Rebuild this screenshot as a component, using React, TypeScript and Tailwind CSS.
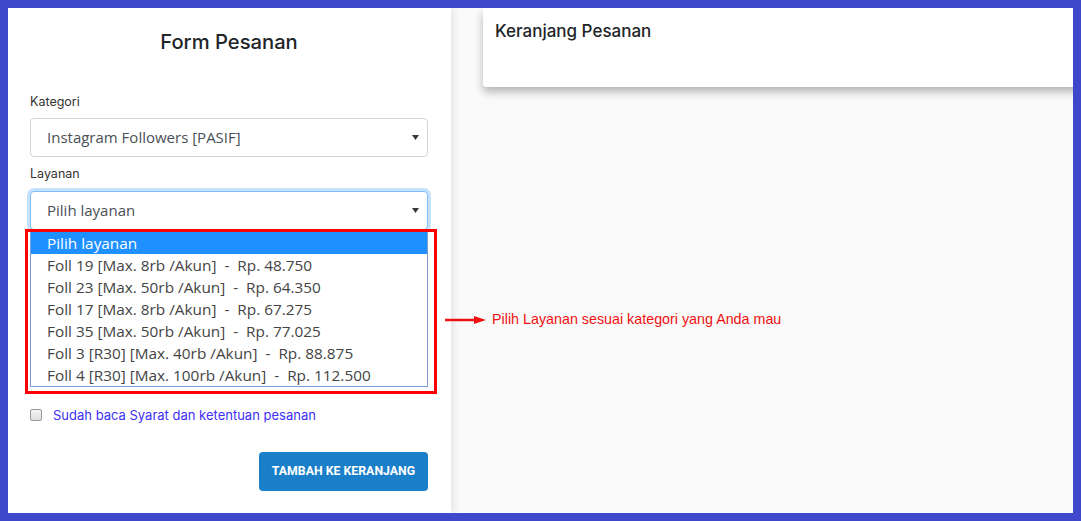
import React from "react";

const poppins = "font-['Inter','Noto_Sans',sans-serif]";
const segoe = "font-['Open_Sans','Noto_Sans',sans-serif]";

const options = [
  "Foll 19 [Max. 8rb /Akun]  -  Rp. 48.750",
  "Foll 23 [Max. 50rb /Akun]  -  Rp. 64.350",
  "Foll 17 [Max. 8rb /Akun]  -  Rp. 67.275",
  "Foll 35 [Max. 50rb /Akun]  -  Rp. 77.025",
  "Foll 3 [R30] [Max. 40rb /Akun]  -  Rp. 88.875",
  "Foll 4 [R30] [Max. 100rb /Akun]  -  Rp. 112.500",
];

function Caret() {
  return (
    <svg width="7" height="5" viewBox="0 0 7 5" className="shrink-0">
      <path d="M0 0 L7 0 L3.5 5 Z" fill="#343a40" />
    </svg>
  );
}

function FakeSelect({ value, focused }: { value: string; focused?: boolean }) {
  return (
    <div
      className={
        "flex h-[39px] items-center justify-between rounded-[4px] border bg-white pl-[16px] pr-[8px] " +
        (focused
          ? "border-[#80bdff] shadow-[0_0_0_3px_rgba(0,123,255,0.22)]"
          : "border-[#ced4da]")
      }
    >
      <span className={`${segoe} text-[15px] text-[#495057]`}>{value}</span>
      <Caret />
    </div>
  );
}

export default function App() {
  return (
    <div className="relative h-[521px] w-[1081px] overflow-hidden bg-[#3f48cb] p-[8px]">
      <div className="flex h-full w-full overflow-hidden bg-[#fafafa]">
        {/* form panel */}
        <div className="relative z-10 w-[443px] shrink-0 bg-white pl-[22px] pr-[23px] pt-[22px] shadow-[3px_0_8px_rgba(0,0,0,0.09)]">
          <h2 className={`${poppins} text-center text-[20.2px] font-medium leading-[24px] text-[#212529]`}>
            Form Pesanan
          </h2>

          <label className={`${poppins} mt-[38px] block text-[12.5px] leading-[20px] text-[#333]`}>
            Kategori
          </label>
          <div className="mt-[6px]">
            <FakeSelect value="Instagram Followers [PASIF]" />
          </div>

          <label className={`${poppins} mt-[7px] block text-[12.5px] leading-[20px] text-[#333]`}>
            Layanan
          </label>
          <div className="relative mt-[7px]">
            <FakeSelect value="Pilih layanan" focused />
            <ul
              className={`${segoe} absolute left-0 right-0 top-[40px] z-20 border border-[#7f9ccf] bg-white text-[15.35px] leading-[22px] text-[#444]`}
            >
              <li className="whitespace-pre bg-[#1e90ff] pl-[16px] text-white">Pilih layanan</li>
              {options.map((o) => (
                <li key={o} className="whitespace-pre pl-[16px]">
                  {o}
                </li>
              ))}
            </ul>
          </div>

          <div className="mt-[176px] flex items-center gap-[11px]">
            <span className="h-[12px] w-[12px] rounded-[2px] border border-[#9a9a9a] bg-gradient-to-b from-[#f4f4f4] to-[#dedede]" />
            <span className={`${poppins} text-[13px] leading-[18px] text-[#3d2ff5]`}>
              Sudah baca Syarat dan ketentuan pesanan
            </span>
          </div>

          <div className="mt-[28px] flex justify-end">
            <button className="h-[39px] w-[169px] rounded-[4px] bg-[#1a7fc8] font-['Roboto',sans-serif] text-[12.3px] font-bold text-white">
              TAMBAH KE KERANJANG
            </button>
          </div>
        </div>

        {/* cart area */}
        <div className="flex-1 pl-[32px]">
          <div className="h-[79px] w-[700px] rounded-b-[3px] bg-white px-[12px] pt-[12px] shadow-[0_5px_9px_rgba(0,0,0,0.28)]">
            <h3 className={`${poppins} text-[17px] font-medium leading-[22px] text-[#212529]`}>
              Keranjang Pesanan
            </h3>
          </div>
        </div>
      </div>

      {/* annotation overlay */}
      <div className="pointer-events-none absolute left-[25px] top-[229px] z-30 h-[165px] w-[412px] border-[3px] border-[#ff0000]" />
      <div className="pointer-events-none absolute left-[444px] top-[309px] z-30 flex items-center">
        <svg width="44" height="18" viewBox="0 0 44 18">
          <path d="M1 9 L32 9" stroke="#ee1111" strokeWidth="2.5" />
          <path d="M30 5 L42 9 L30 13 Z" fill="#ee1111" />
        </svg>
        <span className="ml-[4px] font-['Liberation_Sans',sans-serif] text-[14.3px] text-[#ee1111]">
          Pilih Layanan sesuai kategori yang Anda mau
        </span>
      </div>
    </div>
  );
}
